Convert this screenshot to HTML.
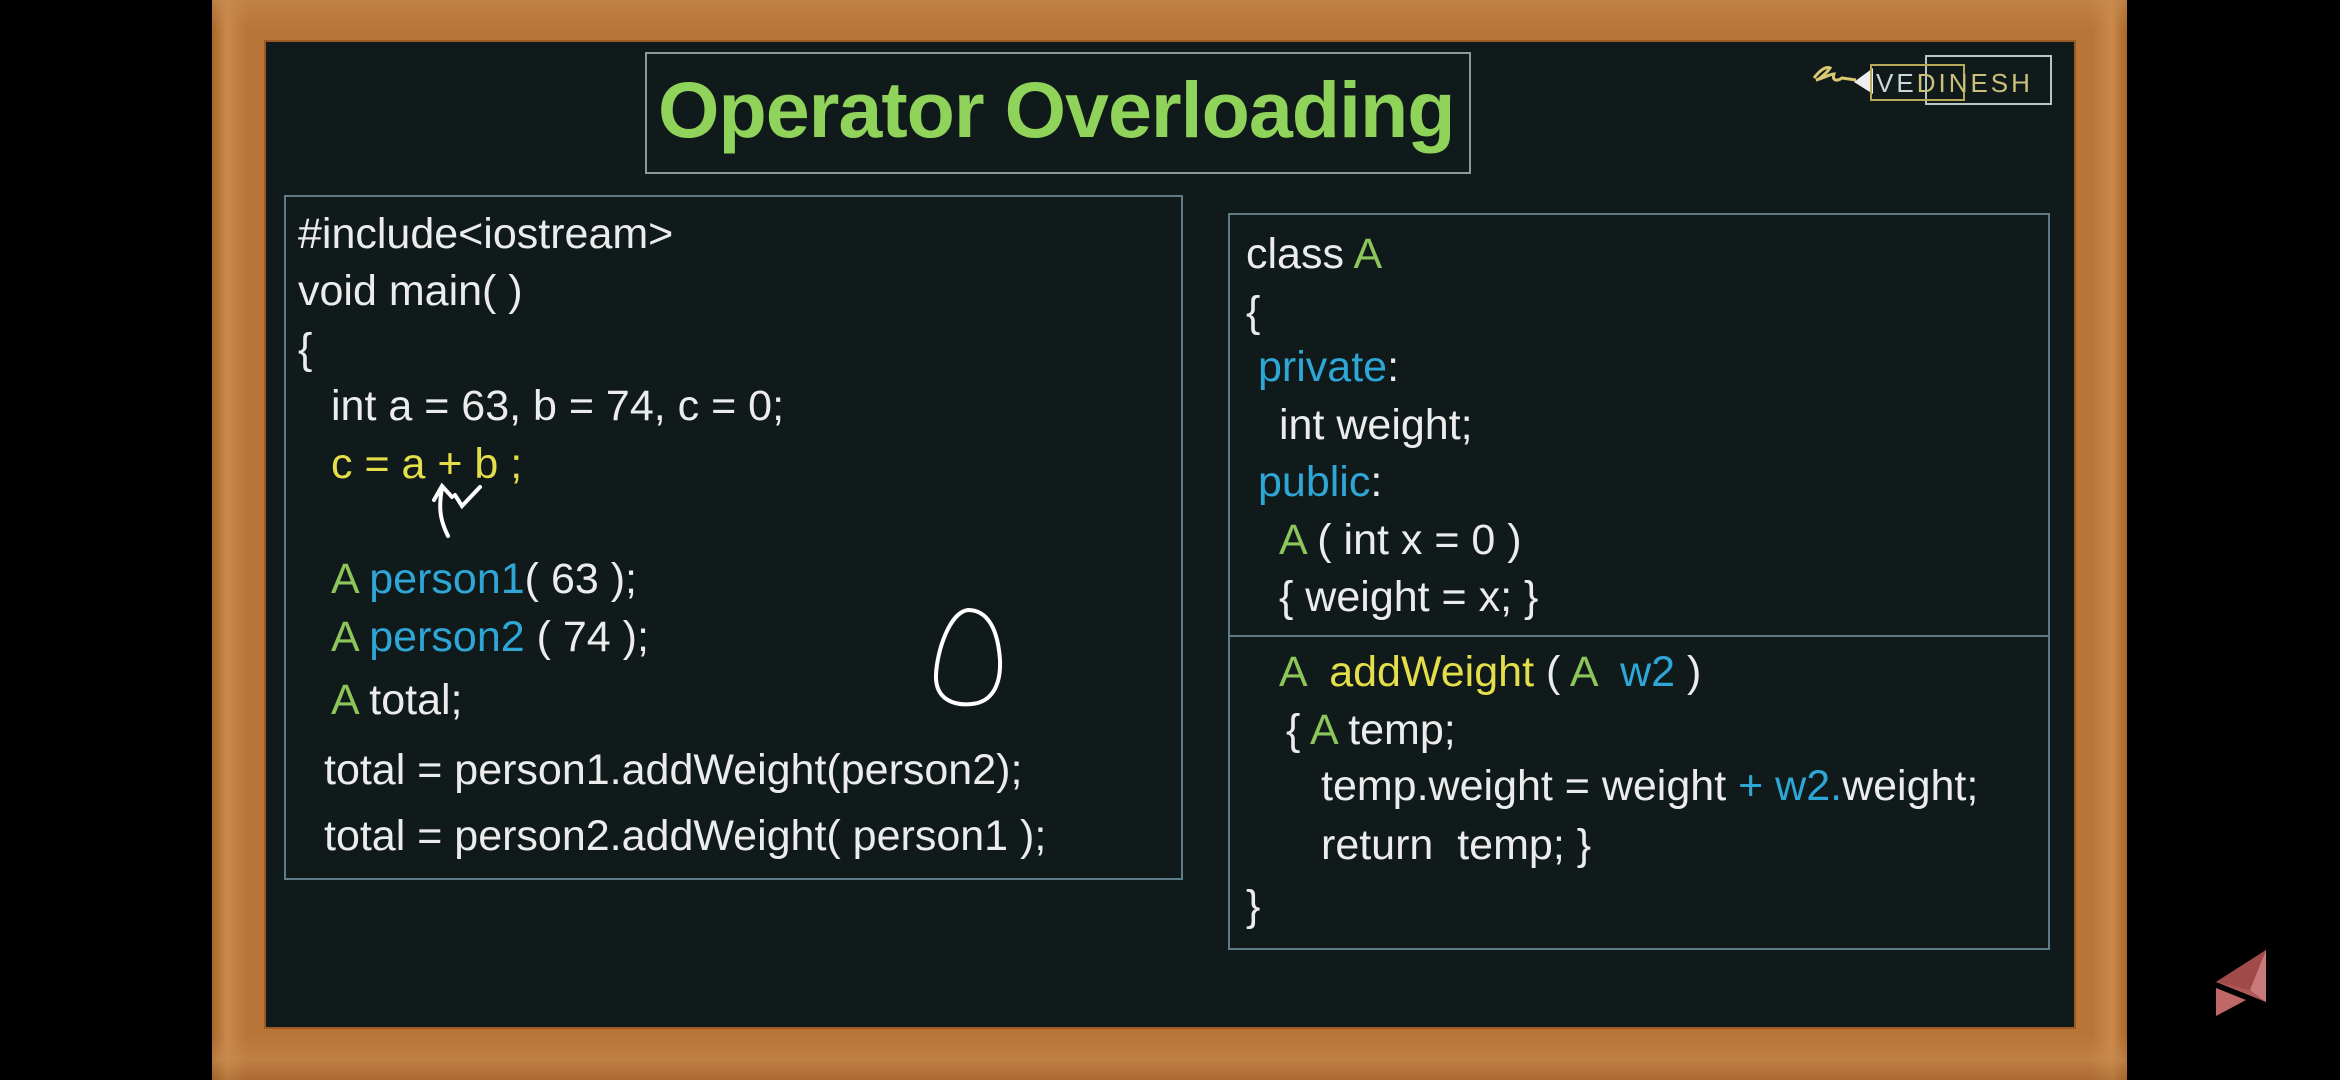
<!DOCTYPE html>
<html><head><meta charset="utf-8"><style>
*{margin:0;padding:0;box-sizing:border-box}
body{width:2340px;height:1080px;background:#000;position:relative;overflow:hidden;font-family:"Liberation Sans",sans-serif}
.frame{position:absolute;left:212px;top:0;width:1915px;height:1080px;background:linear-gradient(90deg,#a9662c 0,#c98a4a 15px,#b87538 35px,#b87538 calc(100% - 35px),#c98a4a calc(100% - 15px),#a9662c 100%)}
.frame2{position:absolute;left:212px;top:0;width:1915px;height:1080px;background:linear-gradient(180deg,rgba(200,140,80,.6) 0,rgba(0,0,0,0) 30px,rgba(0,0,0,0) 1035px,rgba(200,140,80,.5) 1060px,rgba(150,90,40,.4) 1080px)}
.board{position:absolute;left:264px;top:40px;width:1812px;height:989px;background:#111a1a;border:2px solid #9a5a22}
.box{position:absolute;border:2px solid #5d7c88}
.t{position:absolute;font-size:43px;color:#ececec;white-space:pre;line-height:1}
.g{color:#8cc65a}.b{color:#2ea6d6}.y{color:#e3de4a}
</style></head><body>
<div class="frame"></div><div class="frame2"></div>
<div class="board"></div>
<div class="box" style="left:645px;top:52px;width:826px;height:122px;border-color:#8a9a9c"></div>
<div class="t" style="left:658px;top:70px;font-size:79px;font-weight:bold;color:#8fd35a;letter-spacing:-1px">Operator Overloading</div>
<div class="box" style="left:284px;top:195px;width:899px;height:685px"></div>
<div class="box" style="left:1228px;top:213px;width:822px;height:737px"></div>
<div style="position:absolute;left:1230px;top:635px;width:818px;height:2px;background:#5d7c88"></div>
<div class="t" style="left:298px;top:213px">#include&lt;iostream&gt;</div>
<div class="t" style="left:298px;top:270px">void main( )</div>
<div class="t" style="left:298px;top:328px">{</div>
<div class="t" style="left:331px;top:385px">int a = 63, b = 74, c = 0;</div>
<div class="t y" style="left:331px;top:443px">c = a + b ;</div>
<div class="t" style="left:331px;top:558px"><span class="g">A</span> <span class="b">person1</span>( 63 );</div>
<div class="t" style="left:331px;top:616px"><span class="g">A</span> <span class="b">person2</span> ( 74 );</div>
<div class="t" style="left:331px;top:679px"><span class="g">A</span> total;</div>
<div class="t" style="left:324px;top:749px">total = person1.addWeight(person2);</div>
<div class="t" style="left:324px;top:815px">total = person2.addWeight( person1 );</div>
<svg style="position:absolute;left:0;top:0" width="2340" height="1080">
<path d="M448 536 C441 522 438 510 442 488 M434 500 L442 486 L452 497 M455 495 L462 506 L480 487" stroke="#fff" stroke-width="4" fill="none" stroke-linecap="round"/>
<path d="M968 610 C950 612 937 650 936 675 C935 700 955 706 972 704 C992 702 1001 685 1000 660 C998 630 988 610 968 610Z" stroke="#fff" stroke-width="4" fill="none"/>
<path d="M2216 982 L2266 950 L2266 1002 Z" fill="#b05858"/>
<path d="M2266 950 L2266 1002 L2250 990 Z" fill="#c97a7a"/>
<path d="M2216 982 L2250 990 L2266 950Z" fill="#a04a4a"/>
<path d="M2216 988 L2246 1000 L2216 1016 Z" fill="#c06868"/>
<path d="M1814 78 C1820 70 1826 66 1830 68 C1826 74 1818 80 1816 80 C1824 78 1830 74 1834 74 C1832 80 1836 82 1842 78 L1856 80" stroke="#d8c870" stroke-width="3" fill="none"/>
<path d="M1873 68 L1854 82 L1873 94Z" fill="#eee"/>
</svg>
<div class="t" style="left:1246px;top:233px">class <span class="g">A</span></div>
<div class="t" style="left:1246px;top:291px">{</div>
<div class="t" style="left:1258px;top:346px"><span class="b">private</span>:</div>
<div class="t" style="left:1279px;top:404px">int weight;</div>
<div class="t" style="left:1258px;top:461px"><span class="b">public</span>:</div>
<div class="t" style="left:1279px;top:519px"><span class="g">A</span> ( int x = 0 )</div>
<div class="t" style="left:1279px;top:576px">{ weight = x; }</div>
<div class="t" style="left:1279px;top:651px"><span class="g">A</span>  <span class="y">addWeight</span> ( <span class="g">A</span>  <span class="b">w2</span> )</div>
<div class="t" style="left:1286px;top:709px">{ <span class="g">A</span> temp;</div>
<div class="t" style="left:1321px;top:765px">temp.weight = weight <span class="b">+ w2.</span>weight;</div>
<div class="t" style="left:1321px;top:824px">return  temp; }</div>
<div class="t" style="left:1246px;top:885px">}</div>
<div style="position:absolute;left:1925px;top:55px;width:127px;height:50px;border:2px solid #b9c4c8"></div>
<div style="position:absolute;left:1870px;top:64px;width:95px;height:37px;border:2px solid #b8a85a"></div>
<div class="t" style="left:1876px;top:70px;font-size:26px;letter-spacing:3px;color:#c9c07a"><span style="color:#cfd6da">VE</span>DINESH</div>
</body></html>
